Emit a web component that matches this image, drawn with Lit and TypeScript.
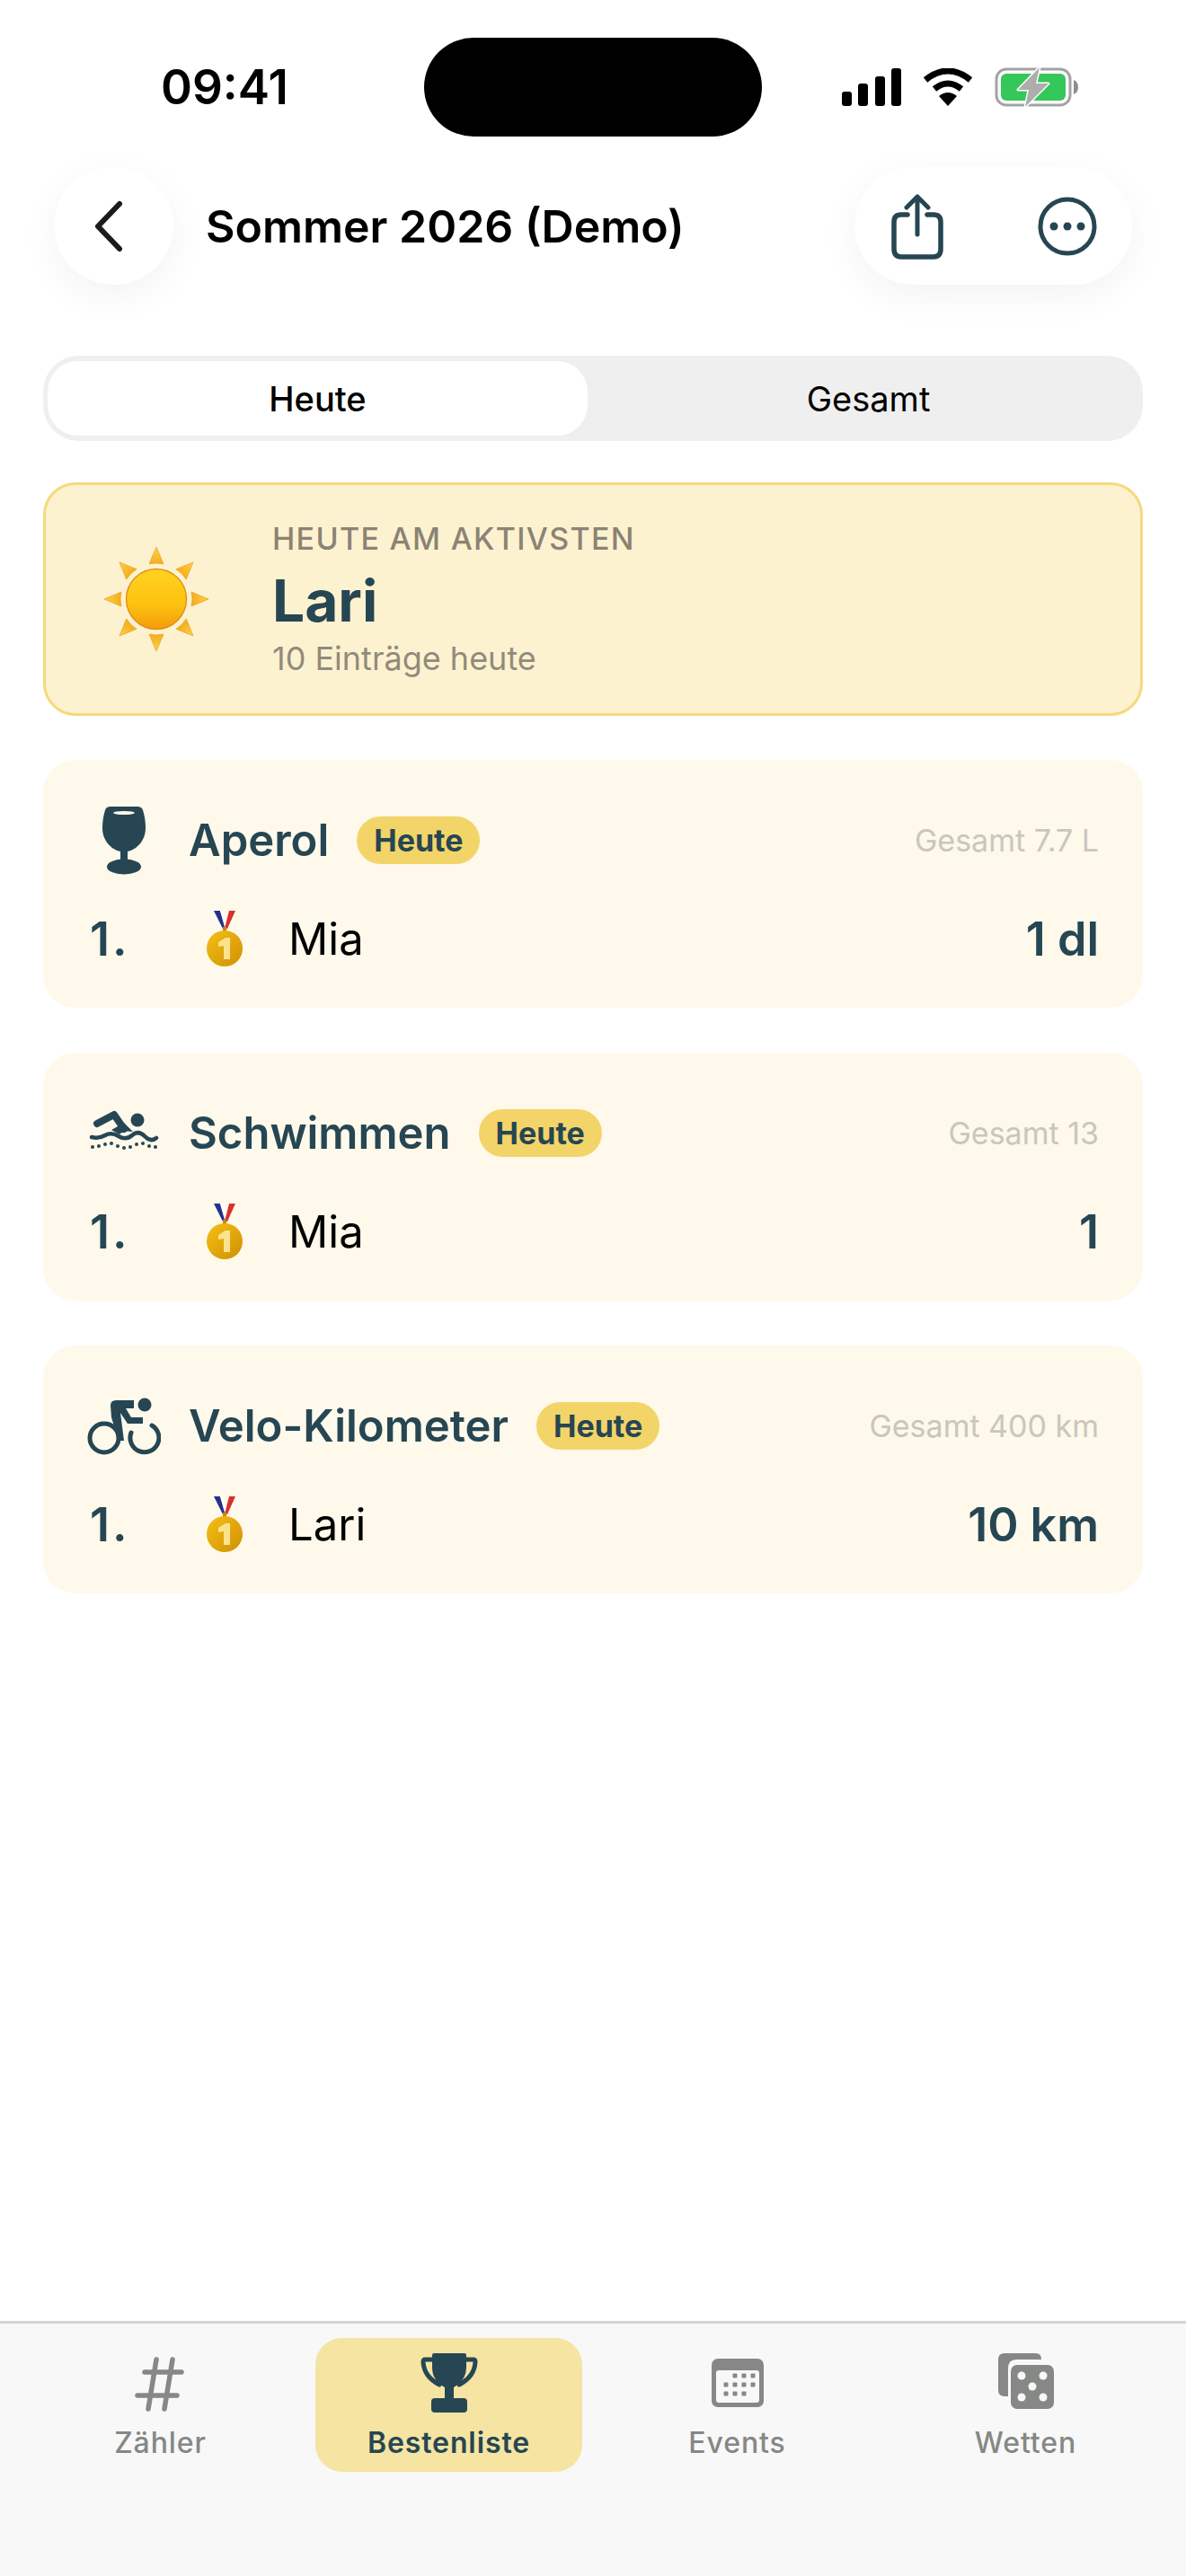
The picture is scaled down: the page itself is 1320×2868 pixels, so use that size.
import { LitElement, css, html, svg } from 'lit';
import { customElement } from 'lit/decorators.js';

const sunRays = [0, 45, 90, 135, 180, 225, 270, 315];

const sunIcon = html`<svg class="sun" viewBox="0 0 120 120">
  <defs>
    <linearGradient id="sunFill" x1="0" y1="0" x2="0" y2="1">
      <stop offset="0" stop-color="#ffd21f" />
      <stop offset="0.6" stop-color="#fdc20f" />
      <stop offset="1" stop-color="#f59a0c" />
    </linearGradient>
    <linearGradient id="rayFill" x1="0" y1="0" x2="0" y2="1">
      <stop offset="0" stop-color="#fbd44a" />
      <stop offset="1" stop-color="#f6ab1c" />
    </linearGradient>
  </defs>
  ${sunRays.map(
    (deg) => svg`<path transform="rotate(${deg} 60 60)" d="M60 2 L68 21 Q60 19 52 21 Z" fill="url(#rayFill)" stroke="#eea52a" stroke-width="0.8" />`
  )}
  <circle cx="60" cy="60" r="33.5" fill="url(#sunFill)" stroke="#e08e1c" stroke-width="1.4" />
</svg>`;

const medalIcon = html`<svg class="medal" viewBox="0 0 44 64">
  <defs>
    <linearGradient id="medalFill" x1="0" y1="0" x2="1" y2="1">
      <stop offset="0" stop-color="#f6c014" />
      <stop offset="1" stop-color="#cf8f05" />
    </linearGradient>
  </defs>
  <path d="M10 1h7l6 20h-3z" fill="#24308f" />
  <path d="M17 1h4l2 12-1 6z" fill="#fff" />
  <path d="M34 1h-7l-5 20h3z" fill="#d9302c" />
  <rect x="20" y="19" width="4" height="5" fill="#c78a0a" />
  <circle cx="22" cy="43" r="20" fill="url(#medalFill)" />
  <path d="M15 36l8-5h5v24h-7V40l-6 1z" fill="#fbe38c" />
</svg>`;

const glassIcon = html`<svg class="cat" viewBox="0 0 82 76">
  <path d="M26 0h30c3 0 5 1 6 4 2 6 3 13 3 20 0 14-10 24-20 26v16h-8V50c-10-2-20-12-20-26 0-7 1-14 3-20 1-3 3-4 6-4z" fill="#264653" />
  <ellipse cx="41" cy="7" rx="12" ry="2" fill="#fef9ea" />
  <ellipse cx="41" cy="67" rx="19" ry="8.5" fill="#264653" />
</svg>`;

const swimIcon = html`<svg class="cat" viewBox="0 0 82 52">
  <circle cx="56" cy="11" r="7.5" fill="#264653" />
  <path d="M11 15 L30 5 L41 21" fill="none" stroke="#264653" stroke-width="8" stroke-linecap="round" stroke-linejoin="round" />
  <path d="M27 22 L41 14 L51 24 Q40 22 36 27 Z" fill="#264653" />
  <path d="M5 30 Q13 32 20 28 T35 29 T50 28 T64 29 T77 31" fill="none" stroke="#264653" stroke-width="4.5" stroke-linecap="round" />
  ${[6, 13, 20, 27, 34, 41, 48, 55, 62, 69, 76].map(
    (x, i) => svg`<circle cx="${x}" cy="${[41, 40, 38, 37, 40, 42, 41, 38, 37, 40, 41][i]}" r="2" fill="#264653" />`
  )}
</svg>`;

const bikeIcon = html`<svg class="cat" viewBox="0 0 82 64">
  <circle cx="64" cy="8" r="7.5" fill="#264653" />
  <path d="M26 9 Q26 3 32 3 H52 V12 H43 L49 22 H62 V29 H45 L37 17 L41 48 H35 L27 22 Z" fill="#264653" />
  <circle cx="19" cy="45" r="16" fill="none" stroke="#264653" stroke-width="5" />
  <path d="M72 31 A16 16 0 1 1 49 39" fill="none" stroke="#264653" stroke-width="5" stroke-linecap="round" />
</svg>`;

const backIcon = html`<svg class="back" viewBox="0 0 34 58">
  <path d="M29 4 L5 29 L29 54" fill="none" stroke="#1c1c1e" stroke-width="6" stroke-linecap="round" stroke-linejoin="round" />
</svg>`;

const shareIcon = html`<svg class="share" viewBox="0 0 60 76">
  <path d="M19 24 H12 Q4 24 4 32 V62 Q4 71 12 71 H48 Q56 71 56 62 V32 Q56 24 48 24 H41" fill="none" stroke="#264653" stroke-width="5.5" stroke-linecap="round" />
  <path d="M30 46 V4 M18 16 L30 4 L42 16" fill="none" stroke="#264653" stroke-width="5" stroke-linecap="round" stroke-linejoin="round" />
</svg>`;

const moreIcon = html`<svg class="more" viewBox="0 0 66 66">
  <circle cx="33" cy="33" r="30" fill="none" stroke="#264653" stroke-width="5" />
  <circle cx="18" cy="33" r="4.5" fill="#264653" />
  <circle cx="33" cy="33" r="4.5" fill="#264653" />
  <circle cx="48" cy="33" r="4.5" fill="#264653" />
</svg>`;

const hashIcon = html`<svg class="tab-icon" viewBox="0 0 70 70">
  <path d="M30 9 L21 64 M48 9 L39 64 M17 23 H58 M9 49 H53" fill="none" stroke="#868886" stroke-width="5.5" stroke-linecap="round" />
</svg>`;

const trophyIcon = html`<svg class="tab-icon" viewBox="0 0 70 70">
  <path d="M18 2 H52 Q54 2 54 4 V18 Q54 32 40 40 V52 H30 V40 Q16 32 16 18 V4 Q16 2 18 2 Z" fill="#264653" />
  <path d="M16 9 H8 Q6 9 6 12 Q7 28 24 37 M54 9 H62 Q64 9 64 12 Q63 28 46 37" fill="none" stroke="#264653" stroke-width="5" stroke-linecap="round" />
  <rect x="15" y="52" width="40" height="16" rx="4" fill="#264653" />
</svg>`;

const calendarDots = [
  [32, 27], [42, 27], [52, 27],
  [22, 37], [32, 37], [42, 37], [52, 37],
  [22, 47], [32, 47], [42, 47],
];

const calendarIcon = html`<svg class="tab-icon" viewBox="0 0 70 70">
  <rect x="6" y="8" width="58" height="54" rx="7" fill="#868886" />
  <rect x="11" y="21" width="48" height="36" rx="3" fill="#f7f8f7" />
  ${calendarDots.map(
    ([x, y]) => svg`<rect x="${x - 2.5}" y="${y - 2.5}" width="5" height="5" rx="1" fill="#868886" />`
  )}
</svg>`;

const diceIcon = html`<svg class="tab-icon" viewBox="0 0 70 70">
  <path d="M11 2 H46 Q52 2 52 9 H24 Q15 9 15 19 V50 H11 Q4 50 4 43 V9 Q4 2 11 2 Z" fill="#868886" />
  <rect x="18" y="15" width="48" height="49" rx="7" fill="#868886" />
  ${[[30, 27], [54, 27], [42, 39], [30, 51], [54, 51]].map(
    ([x, y]) => svg`<circle cx="${x}" cy="${y}" r="4.5" fill="#f7f8f7" />`
  )}
</svg>`;

const cards = [
  { name: 'Aperol', icon: glassIcon, total: 'Gesamt 7.7 L', who: 'Mia', value: '1 dl' },
  { name: 'Schwimmen', icon: swimIcon, total: 'Gesamt 13', who: 'Mia', value: '1' },
  { name: 'Velo-Kilometer', icon: bikeIcon, total: 'Gesamt 400 km', who: 'Lari', value: '10 km' },
];

const tabs = [
  { label: 'Zähler', icon: hashIcon },
  { label: 'Bestenliste', icon: trophyIcon, active: true },
  { label: 'Events', icon: calendarIcon },
  { label: 'Wetten', icon: diceIcon },
];

@customElement('app-root')
export class AppRoot extends LitElement {
  render() {
    return html`
      <div class="status">
        <span class="time">09:41</span>
        <div class="island"></div>
        <div class="status-icons">
          <svg class="signal" viewBox="0 0 66 42">
            <rect x="0" y="26" width="11" height="16" rx="3" />
            <rect x="18" y="17" width="11" height="25" rx="3" />
            <rect x="37" y="9" width="11" height="33" rx="3" />
            <rect x="55" y="0" width="11" height="42" rx="3" />
          </svg>
          <svg class="wifi" viewBox="0 0 58 42">
            <path d="M4 13 Q29 -7 54 13" fill="none" stroke="#000" stroke-width="7" stroke-linecap="butt" />
            <path d="M14 23 Q29 11 44 23" fill="none" stroke="#000" stroke-width="7" />
            <path d="M19 31 Q29 23 39 31 L29 42 Z" fill="#000" />
          </svg>
          <svg class="battery" viewBox="0 0 94 44">
            <rect x="2" y="2" width="82" height="40" rx="11" fill="none" stroke="#a3a3a3" stroke-width="3" />
            <rect x="7" y="7" width="72" height="30" rx="6" fill="#34c759" />
            <path d="M88 14 Q93 16 93 22 Q93 28 88 30 Z" fill="#8e8e8e" />
            <path d="M50 0 L26 25 H38 L34 44 L60 18 H46 Z" fill="#adadad" stroke="#fff" stroke-width="3" stroke-linejoin="round" paint-order="stroke" />
          </svg>
        </div>
      </div>

      <header class="header">
        <button class="back-btn">${backIcon}</button>
        <h1 class="title">Sommer 2026 (Demo)</h1>
        <div class="actions">${shareIcon}${moreIcon}</div>
      </header>

      <main class="main">
        <div class="segment">
          <div class="seg-item selected">Heute</div>
          <div class="seg-item right">Gesamt</div>
        </div>

        <section class="hero">
          ${sunIcon}
          <div class="hero-text">
            <div class="hero-kicker">HEUTE AM AKTIVSTEN</div>
            <div class="hero-name">Lari</div>
            <div class="hero-sub">10 Einträge heute</div>
          </div>
        </section>

        ${cards.map(
          (c) => html`
            <section class="card">
              <div class="card-head">
                <div class="cat-box">${c.icon}</div>
                <span class="card-name">${c.name}</span>
                <span class="badge">Heute</span>
                <span class="total">${c.total}</span>
              </div>
              <div class="card-row">
                <span class="rank">1.</span>
                <div class="medal-box">${medalIcon}</div>
                <span class="who">${c.who}</span>
                <span class="value">${c.value}</span>
              </div>
            </section>
          `
        )}
      </main>

      <nav class="tabbar">
        ${tabs.map(
          (t) => html`
            <div class="tab ${t.active ? 'active' : ''}">
              ${t.icon}
              <span class="tab-label">${t.label}</span>
            </div>
          `
        )}
      </nav>
    `;
  }

  static styles = css`
    :host {
      display: flex;
      flex-direction: column;
      width: 1320px;
      height: 2868px;
      background: #fff;
      font-family: Inter, 'Liberation Sans', sans-serif;
      color: #000;
      overflow: hidden;
    }

    .status {
      display: grid;
      grid-template-columns: 472px 376px 1fr;
      align-items: center;
      height: 110px;
      margin-top: 42px;
      flex: none;
    }

    .time {
      padding-left: 179px;
      font-size: 53px;
      font-weight: 600;
      white-space: nowrap;
    }

    .island {
      height: 110px;
      background: #000;
      border-radius: 55px;
    }

    .status-icons {
      display: flex;
      align-items: center;
      gap: 23px;
      padding-left: 89px;
    }

    .signal {
      width: 66px;
      height: 42px;
      fill: #000;
      flex: none;
    }

    .wifi {
      width: 58px;
      height: 42px;
      flex: none;
    }

    .battery {
      width: 94px;
      height: 44px;
      flex: none;
    }

    .header {
      display: flex;
      align-items: center;
      height: 131px;
      margin-top: 34px;
      padding: 0 60px;
      flex: none;
    }

    .back-btn {
      display: flex;
      align-items: center;
      justify-content: center;
      width: 133px;
      height: 131px;
      padding: 0 12px 0 0;
      border: none;
      border-radius: 50%;
      background: #fff;
      box-shadow: 0 12px 44px rgba(0, 0, 0, 0.05);
      flex: none;
    }

    .back {
      width: 34px;
      height: 58px;
    }

    .title {
      margin: 0 0 0 36px;
      font-size: 50px;
      font-weight: 600;
      white-space: nowrap;
    }

    .actions {
      display: flex;
      align-items: center;
      gap: 104px;
      height: 131px;
      margin-left: auto;
      padding-left: 40px;
      border-radius: 66px;
      background: #fff;
      box-shadow: 0 12px 44px rgba(0, 0, 0, 0.05);
      box-sizing: border-box;
      width: 309px;
    }

    .share {
      width: 60px;
      height: 76px;
      flex: none;
      margin-top: 3px;
    }

    .more {
      width: 66px;
      height: 66px;
      flex: none;
    }

    .main {
      display: flex;
      flex-direction: column;
      flex: 1;
      padding: 79px 48px 0;
      min-height: 0;
    }

    .segment {
      display: grid;
      grid-template-columns: 601px 1fr;
      height: 95px;
      padding: 6px 5px;
      box-sizing: border-box;
      border-radius: 40px;
      background: #efefef;
    }

    .seg-item {
      display: flex;
      align-items: center;
      justify-content: center;
      font-size: 38px;
      font-weight: 500;
    }

    .seg-item.right {
      padding-left: 12px;
      font-weight: 400;
    }

    .seg-item.selected {
      background: #fff;
      border-radius: 34px;
    }

    .hero {
      display: flex;
      align-items: center;
      gap: 69px;
      height: 260px;
      margin-top: 46px;
      padding-left: 63px;
      box-sizing: border-box;
      background: #fdf2d0;
      border: 3px solid #f6d97e;
      border-radius: 36px;
    }

    .sun {
      width: 120px;
      height: 120px;
      flex: none;
    }

    .hero-text {
      display: flex;
      flex-direction: column;
      padding-top: 2px;
    }

    .hero-kicker {
      font-size: 34px;
      font-weight: 500;
      letter-spacing: 1.3px;
      color: #8b8373;
      line-height: 40px;
    }

    .hero-name {
      margin-top: 11px;
      font-size: 64px;
      font-weight: 700;
      color: #264653;
      line-height: 76px;
    }

    .hero-sub {
      margin-top: 3px;
      font-size: 36px;
      color: #918b7b;
      line-height: 46px;
    }

    .card {
      display: flex;
      flex-direction: column;
      height: 276px;
      margin-top: 50px;
      padding: 0 49px 0 52px;
      box-sizing: border-box;
      background: #fef9ea;
      border-radius: 36px;
    }

    .hero + .card {
      margin-top: 49px;
    }

    .card-head {
      display: flex;
      align-items: center;
      height: 89px;
      margin-top: 45px;
    }

    .cat-box {
      width: 82px;
      margin-left: -3px;
      margin-right: 31px;
      display: flex;
      justify-content: center;
      flex: none;
    }

    .cat {
      width: 82px;
      display: block;
    }

    .card-name {
      font-size: 49px;
      font-weight: 600;
      color: #264653;
      white-space: nowrap;
    }

    .badge {
      margin-left: 31px;
      padding: 0 19px;
      height: 53px;
      line-height: 53px;
      border-radius: 27px;
      background: #f3d469;
      color: #264653;
      font-size: 34px;
      font-weight: 700;
    }

    .total {
      margin-left: auto;
      font-size: 34px;
      color: #c9c7bd;
    }

    .card-row {
      display: flex;
      align-items: center;
      height: 76px;
      margin-top: 27px;
    }

    .rank {
      width: 122px;
      font-size: 52px;
      font-weight: 600;
      letter-spacing: 3px;
      color: #264653;
    }

    .medal-box {
      width: 99px;
      padding-left: 6px;
      box-sizing: border-box;
      flex: none;
    }

    .medal {
      display: block;
      width: 44px;
      height: 64px;
    }

    .who {
      font-size: 49px;
      font-weight: 400;
    }

    .value {
      margin-left: auto;
      font-size: 52px;
      font-weight: 600;
      color: #264653;
    }

    .tabbar {
      display: grid;
      grid-template-columns: repeat(4, 1fr);
      gap: 24px;
      align-items: start;
      height: 284px;
      padding: 16px 30px 0;
      box-sizing: border-box;
      background: #f7f8f7;
      border-top: 3px solid #d4d4d4;
      flex: none;
    }

    .tab {
      display: flex;
      flex-direction: column;
      align-items: center;
      height: 149px;
      padding-top: 15px;
      box-sizing: border-box;
      border-radius: 30px;
      color: #858785;
    }

    .tab.active {
      background: #f5e4a2;
      color: #264653;
    }

    .tab-icon {
      width: 70px;
      height: 70px;
      flex: none;
    }

    .tab-label {
      margin-top: 12px;
      font-size: 32px;
      font-weight: 500;
      letter-spacing: 0.9px;
      line-height: 40px;
    }

    .tab.active .tab-label {
      font-weight: 600;
    }
  `;
}

declare global {
  interface HTMLElementTagNameMap {
    'app-root': AppRoot;
  }
}
